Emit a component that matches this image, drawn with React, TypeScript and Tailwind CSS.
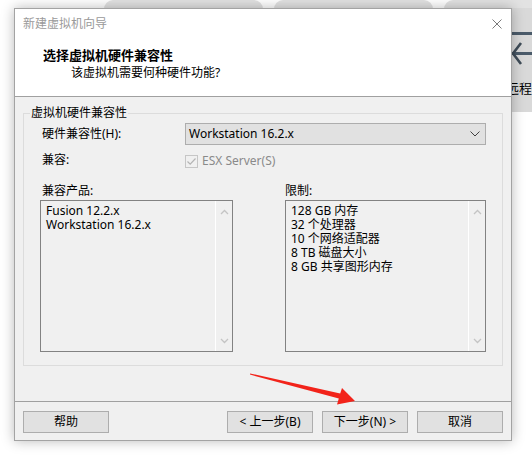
import React from "react";

const font = { fontFamily: '"Noto Sans", "Noto Sans CJK SC", sans-serif' };

function ScrollArrows() {
  return (
    <div className="w-[17px] h-full border-l border-white flex flex-col items-center justify-between pt-[8px] pb-[7px]">
      <svg width="9" height="6" viewBox="0 0 9 6">
        <path d="M1 5 L4.5 1.5 L8 5" fill="none" stroke="#c4c4c4" strokeWidth="1.3" />
      </svg>
      <svg width="9" height="6" viewBox="0 0 9 6">
        <path d="M1 1 L4.5 4.5 L8 1" fill="none" stroke="#c4c4c4" strokeWidth="1.3" />
      </svg>
    </div>
  );
}

function ListBox({ items, width }: { items: string[]; width: string }) {
  return (
    <div className={`${width} h-[152px] border border-[#828282] bg-[#f0f0f0] flex`}>
      <div className="flex-1 pl-[5px] pt-[3px] text-[12px] leading-[14px] text-black">
        {items.map((t) => (
          <div key={t}>{t}</div>
        ))}
      </div>
      <ScrollArrows />
    </div>
  );
}

function Btn({ children }: { children: React.ReactNode }) {
  return (
    <button
      type="button"
      className="w-[86px] h-[22px] bg-[#e1e1e1] border border-[#adadad] text-[12px] leading-[20px] text-black flex items-center justify-center"
    >
      {children}
    </button>
  );
}

export default function App() {
  return (
    <div className="relative w-[532px] h-[457px] bg-white overflow-hidden pt-[8px] pl-[14px]" style={font}>
      {/* background window pieces */}
      <div className="absolute left-[104px] top-0 w-[159px] h-[24px] rounded-t-[9px] bg-[#e2e2e2]" />
      <div className="absolute left-[274px] top-0 w-[159px] h-[24px] rounded-t-[9px] bg-[#e2e2e2]" />
      <div className="absolute left-[444px] top-0 w-[100px] h-[24px] rounded-t-[9px] bg-[#e2e2e2]" />
      <div className="absolute left-[500px] top-[8px] w-[32px] h-[104px] bg-[#d9d9d9]" />
      <div className="absolute left-[500px] top-[32px] w-[32px] h-[3px] bg-[#4b5b6a]" />
      <div className="absolute left-[500px] top-[52px] w-[32px] h-[3px] bg-[#4b5b6a]" />
      <svg className="absolute left-[510px] top-[40px]" width="14" height="26" viewBox="0 0 14 26">
        <path d="M11 3 L3 13.5 L11 24" fill="none" stroke="#3f4c58" strokeWidth="2.6" />
      </svg>
      <div className="absolute left-[506px] top-[79px] text-[13px] leading-[18px] text-black">远程</div>

      {/* dialog */}
      <div className="relative z-10 w-[498px] h-[433px] border border-[#a3a3a3] flex flex-col shadow-[0_0_12px_rgba(0,0,0,0.28)]">
        <div className="h-[87px] bg-white flex flex-col">
          <div className="flex items-center justify-between pt-[7px] pl-[8px] pr-[9px] h-[23px]">
            <span className="text-[12px] leading-[16px] text-[#9a9a9a]">新建虚拟机向导</span>
            <svg width="10" height="10" viewBox="0 0 10 10">
              <path d="M0.5 0.5 L9.5 9.5 M9.5 0.5 L0.5 9.5" stroke="#7a7a7a" strokeWidth="1" />
            </svg>
          </div>
          <div className="mt-[15px] pl-[28px] text-[13px] leading-[16px] font-bold text-black">
            选择虚拟机硬件兼容性
          </div>
          <div className="mt-[2px] pl-[56px] text-[12px] leading-[16px] text-black">
            该虚拟机需要何种硬件功能?
          </div>
        </div>
        <div className="h-px bg-[#a0a0a0]" />

        <div className="h-[304px] bg-[#f0f0f0] pt-[8px] pl-[8px]">
          <fieldset className="w-[480px] border border-[#dcdcdc] pb-[13px]">
            <legend className="ml-[6px] px-[1px] text-[12px] leading-[16px] text-black">
              虚拟机硬件兼容性
            </legend>
            <div className="flex flex-col pl-[16px] pr-[16px] text-[12px] text-black">
              <div className="mt-[2px] flex items-center h-[22px]">
                <span className="w-[145px] pl-[2px] leading-[16px]">硬件兼容性(H):</span>
                <div className="flex-1 h-[22px] bg-[#e1e1e1] border border-[#adadad] flex items-center justify-between pl-[3px] pr-[5px]">
                  <span className="leading-[16px]">Workstation 16.2.x</span>
                  <svg width="10" height="6" viewBox="0 0 10 6">
                    <path d="M0.5 0.5 L5 5 L9.5 0.5" fill="none" stroke="#404040" strokeWidth="1" />
                  </svg>
                </div>
              </div>
              <div className="mt-[8px] flex items-center h-[16px]">
                <span className="w-[145px] pl-[2px] leading-[16px] -mt-[3px]">兼容:</span>
                <div className="w-[13px] h-[13px] border border-[#c6c6c6] bg-[#f0f0f0] flex items-center justify-center">
                  <svg width="11" height="11" viewBox="0 0 11 11">
                    <path d="M1.5 5.5 L4.2 8.2 L9.5 2.5" fill="none" stroke="#b4b4b4" strokeWidth="1.2" />
                  </svg>
                </div>
                <span className="ml-[4px] leading-[16px] text-[#8a8a8a]">ESX Server(S)</span>
              </div>
              <div className="mt-[14px] flex h-[16px] leading-[16px]">
                <span className="w-[245px] pl-[2px]">兼容产品:</span>
                <span>限制:</span>
              </div>
              <div className="mt-[1px] flex justify-between">
                <ListBox width="w-[193px]" items={["Fusion 12.2.x", "Workstation 16.2.x"]} />
                <ListBox
                  width="w-[201px]"
                  items={["128 GB 内存", "32 个处理器", "10 个网络适配器", "8 TB 磁盘大小", "8 GB 共享图形内存"]}
                />
              </div>
            </div>
          </fieldset>
        </div>
        <div className="h-px bg-[#a0a0a0]" />

        <div className="flex-1 bg-[#f0f0f0] flex items-start pt-[9px] px-[8px]">
          <Btn>帮助</Btn>
          <div className="ml-auto flex gap-[9px]">
            <Btn>&lt; 上一步(B)</Btn>
            <Btn>下一步(N) &gt;</Btn>
            <Btn>取消</Btn>
          </div>
        </div>
      </div>

      {/* red arrow annotation */}
      <svg className="absolute left-0 top-0 z-20 pointer-events-none" width="532" height="457" viewBox="0 0 532 457">
        <polygon
          points="250,373.4 340.2,393.4 342,388 355,401 337,404.5 338.8,398.6 250,374.6"
          fill="#f2231a"
        />
      </svg>
    </div>
  );
}
